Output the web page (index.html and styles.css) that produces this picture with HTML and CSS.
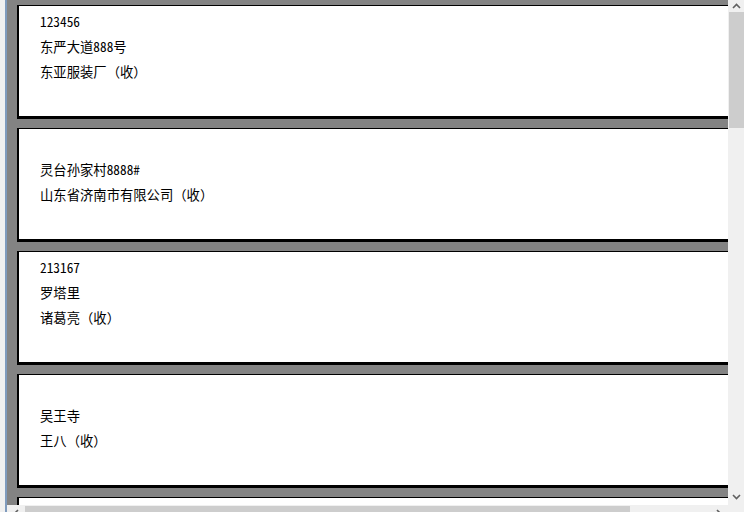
FILE: index.html
```html
<!DOCTYPE html>
<html lang="zh-CN">
<head>
<meta charset="utf-8">
<title>打印预览</title>
<link rel="stylesheet" href="styles.css">
</head>
<body>
<div class="window">
  <div class="frame-left"></div>
  <div class="main">
    <div class="row">
      <div class="viewport">
        <div class="card">
          <div class="line">123456</div>
          <div class="line">东严大道888号</div>
          <div class="line">东亚服装厂<span class="recv">（收）</span></div>
        </div>
        <div class="card">
          <div class="line"></div>
          <div class="line">灵台孙家村8888#</div>
          <div class="line">山东省济南市有限公司<span class="recv">（收）</span></div>
        </div>
        <div class="card">
          <div class="line">213167</div>
          <div class="line">罗塔里</div>
          <div class="line">诸葛亮<span class="recv">（收）</span></div>
        </div>
        <div class="card">
          <div class="line"></div>
          <div class="line">吴王寺</div>
          <div class="line">王八<span class="recv">（收）</span></div>
        </div>
        <div class="card">
          <div class="line"></div>
          <div class="line"></div>
          <div class="line"></div>
        </div>
      </div>
      <div class="vscroll">
        <div class="sbtn">
          <svg width="9" height="6" viewBox="0 0 9 6"><path d="M1 5 L4.5 1.5 L8 5" fill="none" stroke="#606060" stroke-width="1.6"/></svg>
        </div>
        <div class="vthumb"></div>
        <div class="vtrack"></div>
        <div class="sbtn">
          <svg width="9" height="6" viewBox="0 0 9 6"><path d="M1 1 L4.5 4.5 L8 1" fill="none" stroke="#606060" stroke-width="1.6"/></svg>
        </div>
      </div>
    </div>
    <div class="hscroll">
      <div class="hbtn">
        <svg width="6" height="9" viewBox="0 0 6 9"><path d="M5 1 L1.5 4.5 L5 8" fill="none" stroke="#606060" stroke-width="1.6"/></svg>
      </div>
      <div class="hthumb"></div>
      <div class="htrack"></div>
      <div class="hbtn">
        <svg width="6" height="9" viewBox="0 0 6 9"><path d="M1 1 L4.5 4.5 L1 8" fill="none" stroke="#606060" stroke-width="1.6"/></svg>
      </div>
      <div class="corner"></div>
    </div>
  </div>
</div>
</body>
</html>
```

FILE: styles.css
```css
html, body {
  margin: 0;
  padding: 0;
  height: 512px;
  overflow: hidden;
  background: #f0f0f0;
}

.window {
  display: flex;
  width: 744px;
  height: 522px;
  font-family: "Noto Sans CJK SC", "Noto Sans", sans-serif;
  font-feature-settings: "hwid" 1;
}

.frame-left {
  width: 5px;
  flex: none;
  background: #f0f0f0;
  border-right: 2px solid #7f9bbd;
}

.main {
  flex: 1;
  display: flex;
  flex-direction: column;
  min-width: 0;
}

.row {
  display: flex;
  height: 505px;
  flex: none;
}

.viewport {
  flex: 1;
  min-width: 0;
  background: #838383;
  overflow: hidden;
  padding: 5px 0 0 10px;
  display: flex;
  flex-direction: column;
  gap: 9px;
}

.card {
  flex: none;
  width: 800px;
  height: 114px;
  box-sizing: border-box;
  background: #fff;
  border-top: 1px solid #000;
  border-left: 2px solid #000;
  border-bottom: 3px solid #000;
  padding: 3px 0 0 21px;
}

.line {
  height: 25px;
  line-height: 25px;
  font-size: 13.33px;
  color: #000;
  white-space: nowrap;
}

.recv {
  font-feature-settings: normal;
}

.vscroll {
  width: 16px;
  flex: none;
  background: #f0f0f0;
  display: flex;
  flex-direction: column;
}

.sbtn {
  height: 12px;
  flex: none;
  display: flex;
  align-items: center;
  justify-content: center;
}

.sbtn:last-child {
  height: 17px;
}

.vthumb {
  height: 116px;
  flex: none;
  margin-left: 1px;
  background: #cdcdcd;
}

.vtrack {
  flex: 1;
}

.hscroll {
  height: 17px;
  flex: none;
  display: flex;
  background: #f0f0f0;
}

.hbtn {
  width: 18px;
  flex: none;
  display: flex;
  align-items: center;
  justify-content: center;
}

.hthumb {
  width: 605px;
  flex: none;
  margin-top: 1px;
  background: #cdcdcd;
}

.htrack {
  flex: 1;
}

.corner {
  width: 16px;
  flex: none;
  background: #f0f0f0;
}
```
